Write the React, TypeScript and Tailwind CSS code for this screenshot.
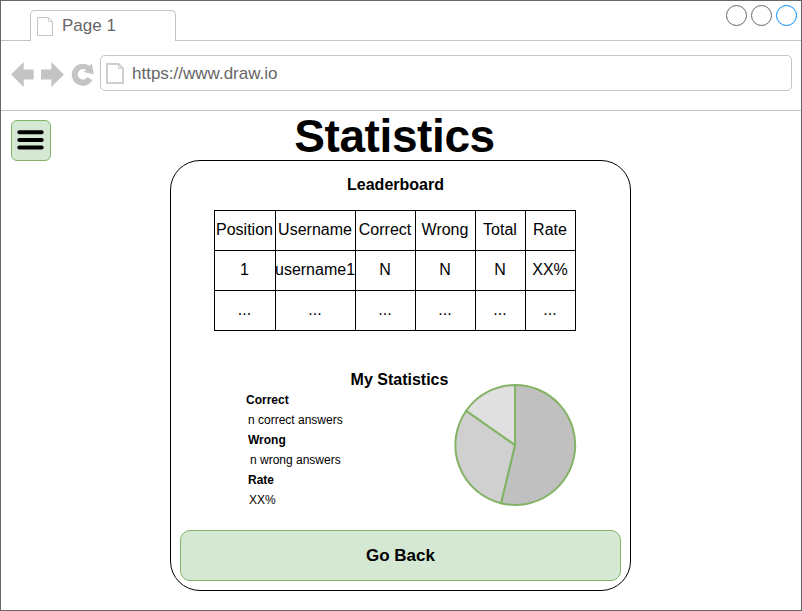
import React from "react";

const columns = ["Position", "Username", "Correct", "Wrong", "Total", "Rate"];
const rows = [
  columns,
  ["1", "username1", "N", "N", "N", "XX%"],
  ["...", "...", "...", "...", "...", "..."],
];

function BrowserChrome() {
  return (
    <header>
      <div className="flex h-10 justify-between border-b border-[#c4c4c4]">
        <div className="-mb-px ml-[29px] mt-[9px] flex w-[146px] rounded-t-[5px] border border-b-0 border-[#c4c4c4] bg-white pl-[6px] pt-[6px]">
          <svg width="17" height="19" viewBox="0 0 17 19" fill="none" stroke="#c4c4c4">
            <path d="M.5.5h11l4 4v14H.5z" />
            <path d="M11.5.5v4h4" strokeWidth=".8" />
          </svg>
          <span className="ml-2 text-[17px] leading-[18px] text-[#666666]">Page 1</span>
        </div>
        <div className="mr-1 mt-1 flex gap-1">
          <span className="size-[21px] rounded-full border border-[#666666]" />
          <span className="size-[21px] rounded-full border border-[#666666]" />
          <span className="size-[21px] rounded-full border border-[#008cff]" />
        </div>
      </div>
      <div className="flex h-[70px] border-b border-[#c4c4c4] pl-[10px] pt-[14px]">
        <svg className="mr-[5px] mt-[6px]" width="84" height="28" viewBox="11 61 84 28" fill="#c4c4c4">
          <path d="M11 74.5 23.7 62v7.5h10v10h-10V87z" />
          <path d="M64 74.5 51.3 62v7.5H41v10h10.3V87z" />
          <path d="M91.800 63.800 93.800 74.300 83.300 72 86.300 70A5.300 5.300 0 1 0 87.600 77L92.300 80.200A11 11 0 1 1 89.200 65.800z" />
        </svg>
        <div className="flex h-9 w-[692px] rounded-[5px] border border-[#c4c4c4] pl-[5px] pt-[7px]">
          <svg width="18" height="21" viewBox="0 0 18 21" fill="none" stroke="#cecece">
            <path d="M1 1h11.500L17 5.500V20H1z" strokeWidth="2" />
            <path d="M12.500 1v4.500H17" />
          </svg>
          <span className="ml-2 mt-[2px] text-[17px] leading-[18px] text-[#666666]">https://www.draw.io</span>
        </div>
      </div>
    </header>
  );
}

function Leaderboard() {
  return (
    <div className="ml-[43px] mt-[15px] grid w-[362px] grid-cols-[61px_80px_60px_60px_50px_50px] grid-rows-[40px_40px_40px] border-l border-t border-black text-base">
      {rows.flatMap((row, r) =>
        row.map((cell, c) => (
          <div
            key={`${r}-${c}`}
            className="flex items-center justify-center whitespace-nowrap border-b border-r border-black pb-[2px] pr-px"
          >
            {cell}
          </div>
        )),
      )}
    </div>
  );
}

function MyStatistics() {
  return (
    <div className="flex h-[126px]">
      <div className="w-[282px] pl-[75px] text-xs leading-5">
        <p className="font-bold">Correct</p>
        <p className="pl-[2px]">n correct answers</p>
        <p className="pl-[2px] font-bold">Wrong</p>
        <p className="pl-1">n wrong answers</p>
        <p className="pl-[2px] font-bold">Rate</p>
        <p className="pl-[3px]">XX%</p>
      </div>
      <svg className="-mt-[7px]" width="124" height="124" viewBox="453 383.500 124 124" stroke="#82b366" strokeWidth="2">
        <path d="M515 445.500V385.500A60 60 0 1 1 501 503.800z" fill="#c0c0c0" />
        <path d="M515 445.500 501 503.800A60 60 0 0 1 466.200 411.200z" fill="#d0d0d0" />
        <path d="M515 445.500 466.200 411.200A60 60 0 0 1 515 385.500z" fill="#e0e0e0" />
      </svg>
    </div>
  );
}

export default function App() {
  return (
    <div className="h-[611px] w-[802px] overflow-hidden border border-[#666666] bg-white font-['Liberation_Sans',Arial,sans-serif] text-black">
      <BrowserChrome />
      <main className="flex pl-[10px]">
        <button className="mt-[9px] flex h-[41px] w-10 items-center justify-center rounded-[6px] border border-[#82b366] bg-[#d5e8d4]">
          <svg className="mb-px mr-px" width="27" height="20" viewBox="0 0 27 20" stroke="black" strokeWidth="4" strokeLinecap="round">
            <path d="M2.300 2.300h22.400M2.300 10h22.400M2.300 17.500h22.400" />
          </svg>
        </button>
        <div className="ml-[119px] w-[461px]">
          <h1 className="flex h-[49px] items-center justify-center pr-[12px] text-[46px] font-bold leading-none">
            <span className="tracking-[-0.4px]">Statistics</span>
          </h1>
          <section className="h-[431px] rounded-[30px] border border-black pt-[14px]">
            <h2 className="mr-[10px] text-center text-base font-bold leading-5">Leaderboard</h2>
            <Leaderboard />
            <h2 className="mr-[2px] mt-[39px] text-center text-base font-bold leading-5">My Statistics</h2>
            <MyStatistics />
            <button className="ml-[9px] mt-[14px] flex h-[51px] w-[441px] items-center justify-center rounded-[10px] border border-[#82b366] bg-[#d5e8d4] text-[17px] font-bold">
              Go Back
            </button>
          </section>
        </div>
      </main>
    </div>
  );
}
